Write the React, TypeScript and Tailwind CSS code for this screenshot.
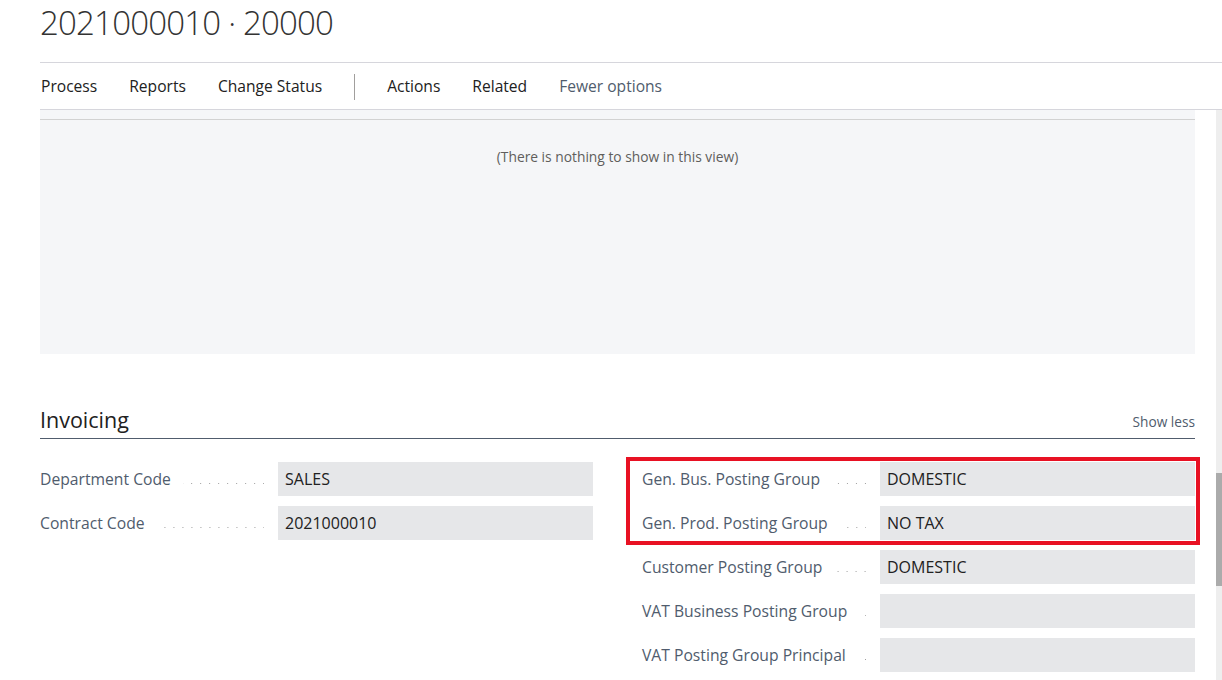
const NAV_LEFT = ['Process', 'Reports', 'Change Status']
const NAV_RIGHT = ['Actions', 'Related']

const LEFT_FIELDS = [
  { label: 'Department Code', value: 'SALES' },
  { label: 'Contract Code', value: '2021000010' },
]

const HIGHLIGHTED = [
  { label: 'Gen. Bus. Posting Group', value: 'DOMESTIC' },
  { label: 'Gen. Prod. Posting Group', value: 'NO TAX' },
]

const RIGHT_FIELDS = [
  { label: 'Customer Posting Group', value: 'DOMESTIC' },
  { label: 'VAT Business Posting Group', value: '' },
  { label: 'VAT Posting Group Principal', value: '' },
]

function Field({ label, value }: { label: string; value: string }) {
  return (
    <div className="flex h-[34px] items-center">
      <div className="flex w-[238px] shrink-0 items-center pt-px">
        <span className="whitespace-nowrap text-[15.7px] text-[#505c6d]">{label}</span>
        <span className="ml-3 mr-[14px] mt-[8px] h-px flex-1 bg-[linear-gradient(to_left,#a0a0a0_1px,transparent_1px)] bg-[length:9px_1px] bg-right bg-repeat-x" />
      </div>
      <div className="flex h-full flex-1 items-center bg-[#e6e7e9] pl-[7px] text-[16px] text-[#212121]">
        {value}
      </div>
    </div>
  )
}

export default function App() {
  return (
    <div className="h-[680px] w-[1222px] overflow-hidden bg-white font-['Open_Sans',sans-serif]">
      {/* Title */}
      <div className="ml-10 h-[63px] border-b border-[#d6d6dc]">
        <h1 className="text-[33px] font-light leading-[45px] tracking-[-0.8px] text-[#333333]">
          2021000010 · 20000
        </h1>
      </div>

      {/* Action bar */}
      <div className="ml-10 flex h-[47px] items-center gap-[32px] border-b border-[#d6d6dc] pl-px pt-px text-[15.6px] text-[#212121]">
        {NAV_LEFT.map((item) => (
          <span key={item}>{item}</span>
        ))}
        <span className="h-[26px] w-px bg-[#a19f9d]" />
        {NAV_RIGHT.map((item) => (
          <span key={item}>{item}</span>
        ))}
        <span className="text-[#505c6d]">Fewer options</span>
      </div>

      <div className="flex">
        <div className="flex-1 pl-10 pr-[21px]">
          {/* Empty lines part */}
          <div className="h-[244px] bg-[#f5f6f8] pt-[9px]">
            <div className="border-t border-[#d2d2d2] pt-[28px] text-center text-[13.8px] leading-[18px] text-[#605e5c]">
              (There is nothing to show in this view)
            </div>
          </div>

          {/* Invoicing */}
          <div className="mt-[52px] flex items-end justify-between border-b border-[#505c6d] pb-1">
            <h2 className="text-[21.5px] leading-[28px] text-[#212121]">Invoicing</h2>
            <span className="pb-[1px] text-[13.7px] text-[#505c6d]">Show less</span>
          </div>

          <div className="mt-[23px] grid grid-cols-2 gap-x-[49px]">
            <div className="flex flex-col gap-[10px]">
              {LEFT_FIELDS.map((f) => (
                <Field key={f.label} {...f} />
              ))}
            </div>
            <div className="flex flex-col gap-[10px]">
              <div className="relative flex flex-col gap-[10px]">
                {HIGHLIGHTED.map((f) => (
                  <Field key={f.label} {...f} />
                ))}
                <div className="pointer-events-none absolute -bottom-[5px] -left-[16px] -right-[5px] -top-[5px] border-4 border-[#e81123]" />
              </div>
              {RIGHT_FIELDS.map((f) => (
                <Field key={f.label} {...f} />
              ))}
            </div>
          </div>
        </div>

        {/* Scrollbar */}
        <div className="h-[570px] w-[6px] bg-[#eeeeee]">
          <div className="mt-[363px] h-[113px] bg-[#ababab]" />
        </div>
      </div>
    </div>
  )
}
